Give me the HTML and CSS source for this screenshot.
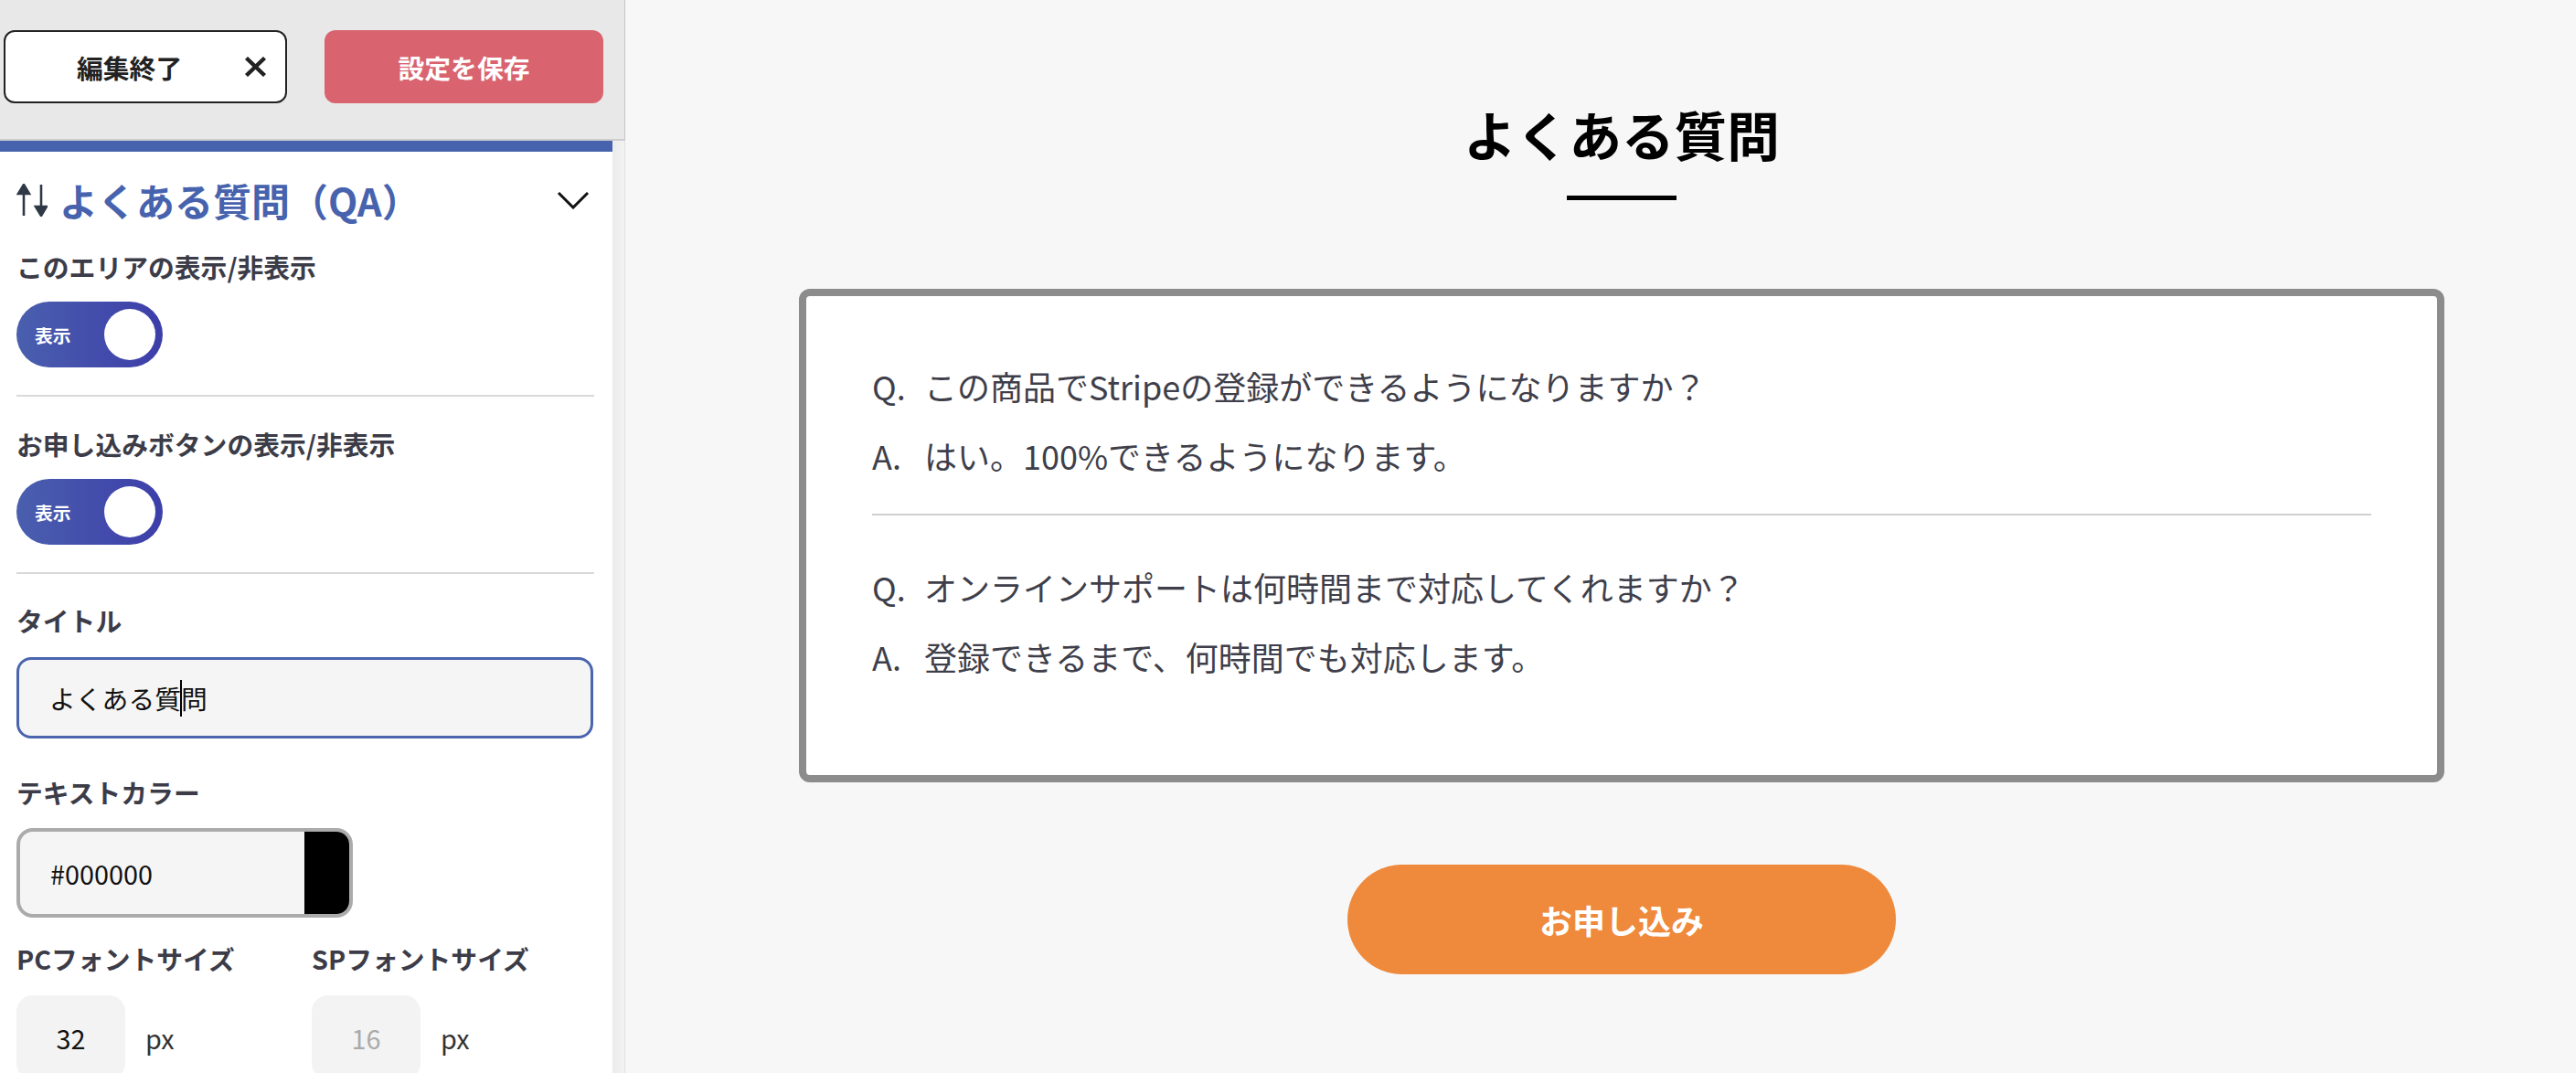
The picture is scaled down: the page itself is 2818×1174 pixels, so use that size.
FILE: index.html
```html
<!DOCTYPE html>
<html lang="ja">
<head>
<meta charset="utf-8">
<title>よくある質問 編集</title>
<link rel="stylesheet" href="styles.css">
</head>
<body>
<div class="app">
  <aside class="sidebar">
    <div class="sb-header">
      <button class="btn-close"><span>編集終了</span>
        <svg class="x-icon" viewBox="0 0 25 22" aria-hidden="true"><path d="M2.5 1.5 L22.5 20.5 M22.5 1.5 L2.5 20.5" /></svg>
      </button>
      <button class="btn-save">設定を保存</button>
    </div>
    <div class="sb-body">
      <div class="sb-scroll">
        <div class="sb-title">
          <svg class="sort-icon" viewBox="0 0 34 36" aria-hidden="true">
            <line x1="8" y1="9" x2="8" y2="35" />
            <polygon points="2,11 8,1 14,11" />
            <line x1="27" y1="1" x2="27" y2="27" />
            <polygon points="21,25 27,35 33,25" />
          </svg>
          <h2>よくある質問（QA）</h2>
          <svg class="chevron" viewBox="0 0 36 20" aria-hidden="true"><polyline points="2,2 18,18 34,2" /></svg>
        </div>

        <div class="field divided">
          <div class="label">このエリアの表示/非表示</div>
          <div class="toggle"><span class="toggle-text">表示</span><span class="knob"></span></div>
        </div>

        <div class="field divided second">
          <div class="label">お申し込みボタンの表示/非表示</div>
          <div class="toggle"><span class="toggle-text">表示</span><span class="knob"></span></div>
        </div>

        <div class="field title-field">
          <div class="label">タイトル</div>
          <div class="text-input">よくある質<span class="caret"></span>問</div>
        </div>

        <div class="field color-field">
          <div class="label">テキストカラー</div>
          <div class="color-input"><span class="color-value">#000000</span><span class="color-swatch"></span></div>
        </div>

        <div class="size-row">
          <div class="size-col">
            <div class="label">PCフォントサイズ</div>
            <div class="num-wrap"><span class="num-input">32</span><span class="unit">px</span></div>
          </div>
          <div class="size-col">
            <div class="label">SPフォントサイズ</div>
            <div class="num-wrap"><span class="num-input muted">16</span><span class="unit">px</span></div>
          </div>
        </div>
      </div>
      <div class="sb-track"></div>
    </div>
  </aside>

  <main class="preview">
    <h1 class="pv-title">よくある質問</h1>
    <div class="pv-rule"></div>
    <div class="qa-card">
      <div class="qa-item">
        <p><span class="qa-mark">Q.</span>この商品でStripeの登録ができるようになりますか？</p>
        <p><span class="qa-mark">A.</span>はい。100%できるようになります。</p>
      </div>
      <div class="qa-item">
        <p><span class="qa-mark">Q.</span>オンラインサポートは何時間まで対応してくれますか？</p>
        <p><span class="qa-mark">A.</span>登録できるまで、何時間でも対応します。</p>
      </div>
    </div>
    <a class="apply-btn">お申し込み</a>
  </main>
</div>
</body>
</html>
```

FILE: styles.css
```css
html, body {
  margin: 0;
  padding: 0;
}

body {
  font-family: "Noto Sans CJK JP", "Noto Sans", sans-serif;
  color: #111;
}

.app {
  display: flex;
  width: 2818px;
  height: 1174px;
  overflow: hidden;
}

/* ---------- sidebar ---------- */
.sidebar {
  width: 684px;
  flex-shrink: 0;
  display: flex;
  flex-direction: column;
  background: #fff;
}

.sb-header {
  height: 154px;
  box-sizing: border-box;
  flex-shrink: 0;
  background: #e8e8e8;
  border-bottom: 2px solid #cdcdcd;
  border-right: 1px solid #c6c6c6;
  display: flex;
  align-items: flex-start;
  gap: 41px;
  padding: 33px 0 0 4px;
}

.btn-close {
  width: 310px;
  height: 80px;
  box-sizing: border-box;
  border: 2px solid #222;
  border-radius: 12px;
  background: #fff;
  display: flex;
  align-items: center;
  padding: 0 20px 0 78px;
  font-family: "Noto Sans CJK JP", sans-serif;
  font-weight: 700;
  font-size: 28.8px;
  color: #222;
}

.x-icon {
  width: 25px;
  height: 22px;
  margin-left: auto;
  fill: none;
  stroke: #222;
  stroke-width: 4.4;
}

.btn-save {
  width: 305px;
  height: 80px;
  border: 0;
  border-radius: 12px;
  background: #d9636f;
  color: #fff;
  font-family: "Noto Sans CJK JP", sans-serif;
  font-weight: 700;
  font-size: 28.8px;
}

.sb-body {
  flex: 1;
  min-height: 0;
  display: flex;
  border-right: 1px solid #e0e0e0;
}

.sb-scroll {
  flex: 1;
  border-top: 12px solid #4763ae;
  padding: 25px 20px 0 18px;
  overflow: hidden;
}

.sb-track {
  width: 13px;
  background: linear-gradient(to right, #ebebeb, #f3f3f3);
}

.sb-title {
  display: flex;
  align-items: center;
  height: 56px;
  margin-bottom: 25px;
}

.sort-icon {
  width: 34px;
  height: 36px;
  margin-right: 13px;
  fill: #2e3846;
  stroke: #2e3846;
  stroke-width: 2.6;
}

.sb-title h2 {
  margin: 0;
  font-size: 42px;
  line-height: 56px;
  font-weight: 700;
  color: #4763ae;
}

.chevron {
  width: 36px;
  height: 20px;
  margin-left: auto;
  margin-right: 5px;
  fill: none;
  stroke: #111;
  stroke-width: 3;
}

.label {
  font-size: 28.8px;
  line-height: 40px;
  font-weight: 700;
  color: #3c3c48;
  margin-bottom: 18px;
}

.toggle {
  width: 160px;
  height: 72px;
  border-radius: 36px;
  background: linear-gradient(90deg, #4a5fae, #3d3ea9);
  display: flex;
  align-items: center;
}

.toggle-text {
  margin-left: 20px;
  font-size: 19.8px;
  font-weight: 700;
  color: #fff;
}

.knob {
  width: 56px;
  height: 56px;
  border-radius: 50%;
  background: #fff;
  margin-left: auto;
  margin-right: 8px;
}

.field.divided {
  padding-bottom: 30px;
  border-bottom: 2px solid #d9d9d9;
  margin-bottom: 32px;
}

.field.divided.second {
  margin-bottom: 31px;
}

.title-field .label {
  margin-bottom: 20px;
}

.text-input {
  width: 631px;
  height: 89px;
  box-sizing: border-box;
  border: 3px solid #4a64ae;
  border-radius: 16px;
  background: #f5f5f5;
  padding-left: 33px;
  display: flex;
  align-items: center;
  font-size: 28.8px;
  color: #111;
}

.caret {
  display: inline-block;
  width: 2px;
  height: 40px;
  background: #000;
  margin: 0 -1px;
}

.title-field {
  margin-bottom: 39px;
}

.color-field {
  margin-bottom: 25px;
}

.color-field .label {
  margin-bottom: 19px;
}

.color-input {
  width: 368px;
  height: 98px;
  box-sizing: border-box;
  border: 4px solid #ababab;
  border-radius: 18px;
  background: #f5f5f5;
  overflow: hidden;
  display: flex;
}

.color-value {
  flex: 1;
  display: flex;
  align-items: center;
  padding-left: 33px;
  font-size: 28.8px;
  color: #111;
}

.color-swatch {
  width: 49px;
  background: #000;
}

.size-row {
  display: grid;
  grid-template-columns: 323px 1fr;
}

.size-col .label {
  margin-bottom: 20px;
}

.num-wrap {
  display: flex;
  align-items: center;
  gap: 22px;
}

.num-input {
  width: 119px;
  height: 92px;
  border-radius: 18px;
  background: #f3f3f3;
  display: flex;
  align-items: center;
  justify-content: center;
  font-size: 28.8px;
  color: #111;
}

.num-input.muted {
  color: #aaa;
}

.unit {
  font-size: 28.8px;
  color: #333;
}

/* ---------- preview ---------- */
.preview {
  flex: 1;
  background: #f7f7f7;
  padding: 106px 144px 0 190px;
  display: flex;
  flex-direction: column;
  align-items: center;
}

.pv-title {
  margin: 0;
  font-size: 57.6px;
  line-height: 80px;
  font-weight: 700;
  color: #000;
}

.pv-rule {
  width: 120px;
  height: 5px;
  background: #000;
  margin-top: 28px;
}

.qa-card {
  width: 1800px;
  box-sizing: border-box;
  margin-top: 97px;
  border: 8px solid #8c8c8c;
  border-radius: 12px;
  background: #fff;
  padding: 20px 72px 66px;
}

.qa-item {
  padding: 52px 0 14px;
}

.qa-item + .qa-item {
  border-top: 2px solid #cfcfcf;
}

.qa-item p {
  margin: 0 0 24px;
  font-size: 36px;
  line-height: 52px;
  color: #3f3f4b;
}

.qa-mark {
  display: inline-block;
  width: 57px;
}

.apply-btn {
  margin-top: 90px;
  width: 600px;
  height: 120px;
  border-radius: 60px;
  background: #ef893b;
  color: #fff;
  font-size: 36px;
  font-weight: 700;
  display: flex;
  align-items: center;
  justify-content: center;
}
```
